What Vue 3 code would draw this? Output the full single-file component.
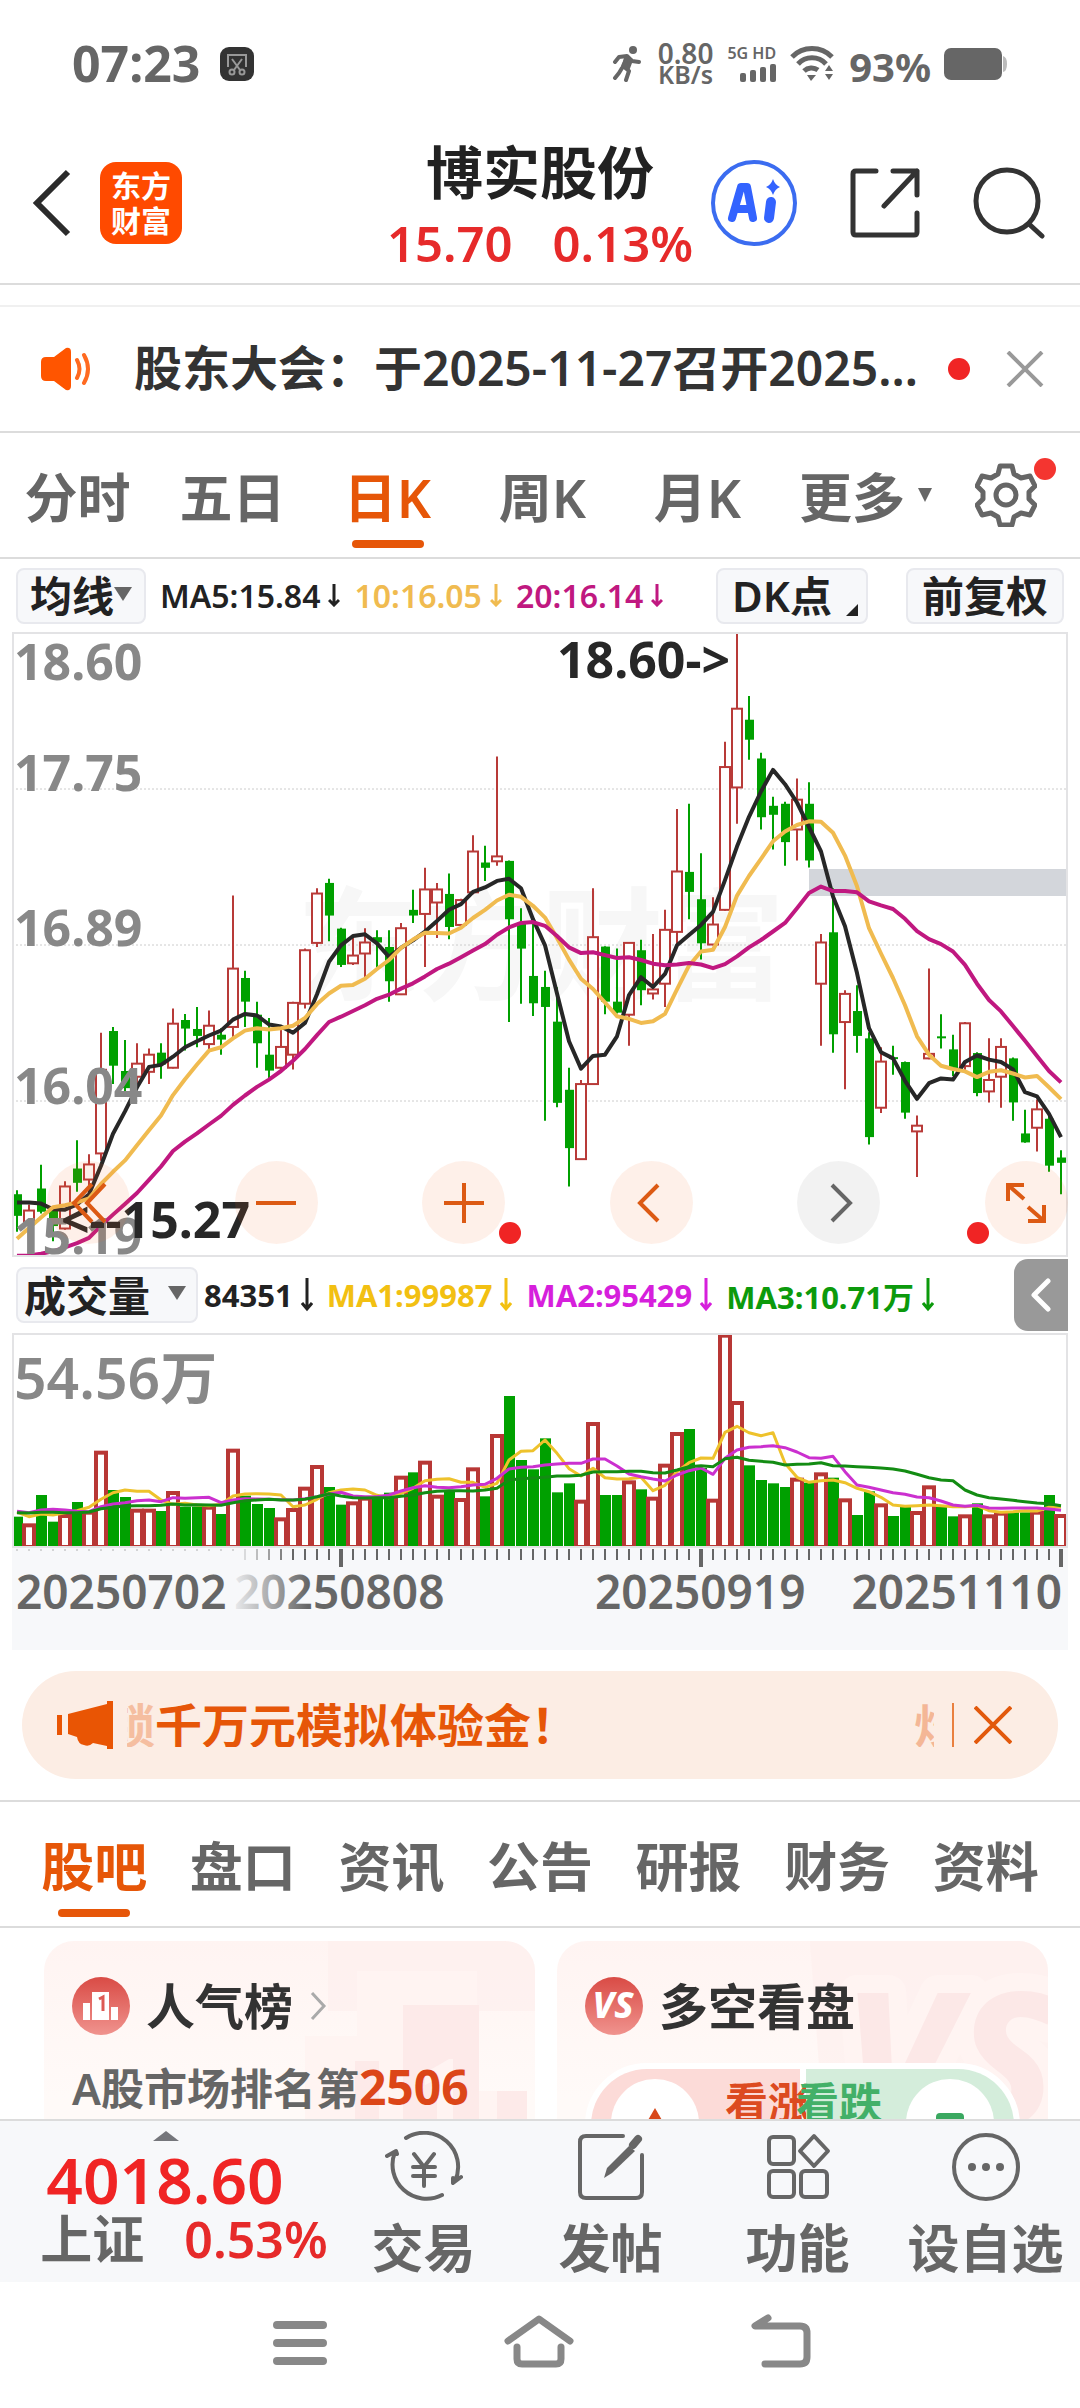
<script setup>
import { ref } from 'vue'

const periods = ['分时', '五日', '日K', '周K', '月K']
const period = ref('日K')
const sections = ['股吧', '盘口', '资讯', '公告', '研报', '财务', '资料']
const section = ref('股吧')

const STEP = 12
const FIRST = 5
const cx = (i) => FIRST + i * STEP

// Chart levels run from 32 (top edge) to 1561 (bottom edge).
const py = (v) => (v - 32) * 0.408

// direction, high, body top, body bottom, low
const candleData = `g 1400 1410 1463 1502|r 1435 1450 1480 1490|g 1338 1396 1453 1457|g 1440 1448 1488 1525
r 1378 1391 1494 1497|g 1278 1347 1382 1404|r 1312 1337 1374 1410|r 1014 1105 1310 1328
g 1000 1010 1095 1140|g 1032 1108 1150 1165|r 1040 1090 1122 1150|r 1053 1068 1110 1140
g 1040 1063 1092 1127|r 955 992 1100 1102|g 968 983 1004 1058|g 951 1005 1022 1050
r 960 997 1042 1055|g 1003 1019 1031 1068|r 678 857 1000 1025|g 862 880 938 1000
g 938 970 1040 1100|g 978 1068 1107 1128|r 1000 1049 1100 1104|r 938 941 1068 1104
r 808 812 943 955|r 660 673 794 804|g 637 647 727 790|g 757 759 848 853
r 780 825 844 848|r 758 793 820 882|g 763 780 793 855|g 763 804 888 938
r 745 758 920 922|g 664 713 727 745|r 610 663 723 853|r 647 663 695 782
g 624 674 755 785|r 686 689 750 752|r 530 570 670 675|g 556 597 610 642
r 337 582 594 605|g 592 593 736 988|g 709 745 808 943|g 745 875 942 973
g 862 902 951 1230|g 903 987 1186 1197|g 1100 1154 1297 1391|r 1130 1140 1324 1326
r 660 780 1140 1142|g 802 803 938 969|g 808 938 965 967|r 792 794 970 1046
g 786 812 910 947|r 772 908 918 933|r 713 762 894 951|r 466 619 767 800
g 453 620 669 736|g 574 687 795 835|r 682 749 798 800|r 301 363 713 715
r 32 220 413 502|g 189 247 296 345|g 328 342 486 516|g 436 458 480 565
g 448 453 547 605|r 391 443 516 592|g 400 453 592 609|r 772 793 894 1046
g 660 768 1018 1063|r 910 919 988 1153|g 898 961 1022 1063|g 1013 1028 1270 1288
r 1050 1085 1198 1211|g 1046 1074 1078 1117|g 1085 1086 1210 1225|r 1217 1242 1256 1368
r 857 1066 1077 1079|g 969 1023 1027 1053|g 1019 1055 1104 1120|r 988 991 1096 1105
g 1062 1064 1162 1170|r 1028 1130 1158 1185|r 1028 1049 1122 1198|g 1075 1077 1185 1230
g 1203 1261 1283 1284|r 1178 1202 1247 1305|g 1210 1225 1340 1355|g 1302 1320 1333 1410`

const candles = candleData.split(/[|\n]/).map((row, i) => {
  const [dir, ...v] = row.split(' ')
  const [high, top, bottom, low] = v.map((n) => py(Number(n)))
  return { x: cx(i), up: dir === 'r', high, top, bottom, low, h: Math.max(2, bottom - top) }
})

const ma5 = [1430, 1430, 1433, 1447, 1448, 1435, 1410, 1340, 1262, 1207, 1148, 1098, 1093, 1073, 1050, 1035, 1021, 1009, 982, 968, 972, 994, 999, 1014, 990, 920, 840, 800, 777, 773, 795, 828, 806, 788, 766, 740, 713, 699, 669, 658, 642, 637, 660, 736, 800, 918, 1035, 1102, 1071, 1068, 1023, 922, 878, 902, 870, 800, 775, 750, 718, 640, 558, 485, 423, 370, 405, 450, 510, 570, 680, 753, 868, 1003, 1062, 1077, 1132, 1176, 1138, 1126, 1129, 1086, 1070, 1080, 1086, 1104, 1160, 1170, 1213, 1270]
const ma10 = [1519, 1493, 1467, 1442, 1437, 1430, 1420, 1385, 1355, 1327, 1290, 1253, 1217, 1167, 1128, 1092, 1058, 1050, 1028, 1009, 1003, 1006, 1003, 997, 978, 944, 918, 899, 897, 882, 858, 836, 806, 786, 769, 770, 771, 757, 733, 713, 690, 676, 681, 703, 732, 782, 835, 882, 907, 940, 974, 980, 990, 986, 968, 908, 850, 815, 811, 755, 678, 630, 588, 545, 521, 505, 496, 497, 524, 580, 655, 758, 820, 880, 947, 1023, 1068, 1095, 1103, 1109, 1123, 1110, 1106, 1114, 1124, 1120, 1148, 1177]
const ma20 = [1561, 1560, 1556, 1550, 1540, 1530, 1517, 1487, 1460, 1434, 1407, 1375, 1342, 1304, 1281, 1261, 1239, 1218, 1191, 1168, 1147, 1129, 1108, 1083, 1054, 1020, 988, 975, 961, 947, 931, 921, 906, 893, 876, 858, 845, 829, 813, 797, 774, 756, 745, 743, 752, 777, 805, 819, 817, 824, 831, 829, 836, 845, 849, 847, 843, 847, 856, 846, 827, 805, 787, 766, 745, 709, 672, 656, 667, 667, 670, 692, 702, 711, 735, 765, 785, 797, 815, 848, 894, 934, 962, 998, 1034, 1071, 1108, 1136]

// Volume levels run from 279 (top edge) to 922 (baseline).
const vy = (v) => (v - 279) / 3
const VOL_BASE = vy(921)
const volumes = [830, 850, 765, 845, 822, 786, 812, 632, 750, 771, 806, 806, 813, 753, 800, 800, 797, 822, 626, 767, 792, 804, 832, 804, 740, 675, 741, 794, 784, 770, 775, 758, 707, 697, 662, 764, 752, 774, 682, 769, 582, 468, 660, 688, 595, 757, 730, 779, 546, 765, 765, 721, 748, 770, 671, 576, 567, 684, 776, 281, 483, 676, 720, 730, 741, 713, 728, 697, 713, 775, 825, 754, 790, 828, 797, 813, 736, 797, 829, 823, 790, 823, 815, 817, 817, 812, 765, 822]
const bars = volumes.map((v, i) => ({
  x: cx(i),
  up: candles[i].up || i === 87,
  y: vy(v),
  h: VOL_BASE - vy(v)
}))
const vma1 = [816, 830, 822, 825, 818, 812, 802, 778, 758, 750, 754, 754, 780, 793, 790, 795, 797, 793, 768, 762, 761, 762, 765, 800, 795, 778, 758, 750, 747, 750, 766, 773, 760, 745, 722, 718, 716, 727, 727, 742, 730, 660, 634, 632, 600, 640, 686, 708, 685, 713, 717, 716, 712, 752, 736, 695, 668, 654, 655, 577, 559, 578, 587, 578, 670, 712, 727, 722, 720, 728, 745, 755, 772, 795, 799, 797, 795, 797, 800, 800, 797, 812, 817, 815, 812, 813, 802, 801]
const vma2 = [814, 818, 810, 808, 810, 814, 815, 800, 792, 788, 782, 780, 785, 773, 775, 773, 772, 788, 780, 776, 777, 778, 779, 780, 776, 770, 762, 757, 768, 770, 770, 765, 753, 743, 737, 742, 743, 740, 735, 733, 715, 687, 682, 680, 675, 672, 670, 670, 657, 657, 678, 702, 710, 717, 723, 705, 692, 684, 703, 655, 630, 622, 620, 617, 623, 636, 653, 655, 649, 695, 735, 742, 750, 758, 763, 771, 773, 783, 795, 799, 796, 804, 805, 804, 804, 804, 807, 811]
const vma3 = [818, 819, 817, 817, 818, 818, 816, 806, 802, 798, 797, 797, 796, 792, 795, 794, 795, 796, 788, 782, 780, 778, 780, 780, 778, 770, 761, 768, 773, 774, 773, 773, 769, 765, 758, 754, 752, 752, 753, 750, 745, 720, 716, 714, 712, 708, 708, 706, 696, 695, 695, 694, 694, 698, 699, 690, 680, 677, 680, 656, 652, 661, 664, 667, 675, 673, 672, 668, 677, 678, 680, 682, 684, 687, 693, 703, 713, 720, 722, 750, 765, 773, 777, 781, 785, 789, 791, 797]

const line = (values, scale) => values.map((v, i) => `${cx(i)},${scale(v).toFixed(1)}`).join(' ')

const priceLabels = [
  { text: '18.60', y: 48 },
  { text: '17.75', y: 159 },
  { text: '16.89', y: 314 },
  { text: '16.04', y: 472 },
  { text: '15.19', y: 622 }
]
const gridLines = [157, 313, 469]

const ticks = volumes.map((_, i) => ({
  x: cx(i),
  major: i === 27 || i === 57 || i === 87,
  h: i < 19 ? 2 : i === 27 || i === 57 || i === 87 ? 18 : 11,
  opacity: i < 19 ? 0.25 : Math.min(1, (i - 18) / 5)
}))

const averages = [
  { name: 'MA5:15.84', tone: 'ink' },
  { name: '10:16.05', tone: 'amber' },
  { name: '20:16.14', tone: 'magenta' }
]
const volumeAverages = [
  { name: '84351', tone: 'ink' },
  { name: 'MA1:99987', tone: 'gold' },
  { name: 'MA2:95429', tone: 'violet' },
  { name: 'MA3:10.71万', tone: 'green' }
]
</script>

<template>
  <div class="app">
    <div class="status">
      <span class="clock">07:23</span>
      <svg class="snip" width="34" height="34" viewBox="0 0 34 34" fill="none">
        <rect width="34" height="34" rx="9" fill="#333" />
        <path d="M8 20V8h18v12M12 12l8 11M22 12l-8 11" stroke="#999" stroke-width="2" />
        <circle cx="12" cy="25" r="2.5" stroke="#999" stroke-width="2" />
        <circle cx="22" cy="25" r="2.5" stroke="#999" stroke-width="2" />
      </svg>
      <svg class="runner" width="32" height="36" viewBox="0 0 32 36" fill="none" stroke="#666" stroke-width="4" stroke-linecap="round" stroke-linejoin="round">
        <circle cx="21" cy="4" r="4" fill="#666" stroke="none" />
        <path d="M3 16l4-5 8-1 5 5 7 1M15 11l-4 9 6 5-3 9M10 22l-3 5-4 5" />
        <path d="M14 12l-2 8 4 2 3-8z" fill="#666" />
      </svg>
      <div class="speed"><span>0.80</span><small>KB/s</small></div>
      <div class="cell">
        <span>5G HD</span>
        <svg width="36" height="18" viewBox="0 0 36 18" fill="#666">
          <rect x="0" y="9" width="6" height="9" rx="2" /><rect x="10" y="6" width="6" height="12" rx="2" />
          <rect x="20" y="3" width="6" height="15" rx="2" /><rect x="30" y="0" width="6" height="18" rx="2" />
        </svg>
      </div>
      <svg class="wifi" width="46" height="36" viewBox="0 0 46 36" fill="none" stroke="#666" stroke-width="5">
        <path d="M2 11a28 28 0 0 1 40 0M8 18a19 19 0 0 1 28 0M14 25a11 11 0 0 1 14-1" />
        <path d="M17 29h9l-5 6z" fill="#666" stroke="none" />
        <path d="M35 25l4-6 4 6zM35 28h8l-4 6z" fill="#666" stroke="none" />
      </svg>
      <span class="percent">93%</span>
      <svg width="64" height="32" viewBox="0 0 64 32"><rect width="58" height="32" rx="7" fill="#666" /><path d="M59 8q4 1 4 8t-4 8z" fill="#bbb" /></svg>
    </div>

    <header class="header">
      <div class="head-left">
        <button class="plain" aria-label="返回">
          <svg width="40" height="68" viewBox="0 0 40 68" fill="none" stroke="#2b2b2b" stroke-width="6"><path d="M36 3L5 34l31 31" /></svg>
        </button>
        <a class="logo" href="#">东方<br />财富</a>
      </div>
      <div class="title">
        <h1>博实股份</h1>
        <p><span>15.70</span><span>0.13%</span></p>
      </div>
      <div class="head-right">
        <button class="plain" aria-label="Ai">
          <svg width="86" height="86" viewBox="0 0 86 86" fill="none">
            <circle cx="43" cy="43" r="41" stroke="#3b6cf0" stroke-width="4" />
            <path d="M21 58l9-31h6l6 31M25 49h14" stroke="#3363ff" stroke-width="8" stroke-linejoin="round" stroke-linecap="round" />
            <path d="M60 42l-2 16" stroke="#3363ff" stroke-width="10" stroke-linecap="round" />
            <path d="M62 19q2 6 7 8-5 2-7 8-2-6-7-8 5-2 7-8z" fill="#3363ff" />
          </svg>
        </button>
        <button class="plain" aria-label="分享">
          <svg width="70" height="70" viewBox="0 0 70 70" fill="none" stroke="#333" stroke-width="5" stroke-linecap="round" stroke-linejoin="round">
            <path d="M26 3H6q-3 0-3 3v58q0 3 3 3h58q3 0 3-3V45M43 3h24v24M67 3L34 38" />
          </svg>
        </button>
        <button class="plain" aria-label="搜索">
          <svg width="72" height="72" viewBox="0 0 72 72" fill="none" stroke="#333" stroke-width="5" stroke-linecap="round">
            <circle cx="34" cy="34" r="31" /><path d="M56 57l13 12" />
          </svg>
        </button>
      </div>
    </header>

    <div class="notice">
      <svg class="horn" width="54" height="44" viewBox="0 0 54 44" fill="none">
        <path d="M6 10h8L26 1q5-1 5 4v34q0 5-5 4L14 34H6q-5 0-5-5V15q0-5 5-5z" fill="#ff5500" />
        <path d="M37 13q5 9 0 18M44 8q8 14 0 28" stroke="#ff6a20" stroke-width="4" stroke-linecap="round" />
      </svg>
      <a href="#">股东大会：于2025-11-27召开2025...</a>
      <i class="dot"></i>
      <button class="plain" aria-label="关闭">
        <svg width="38" height="36" viewBox="0 0 38 36" stroke="#999" stroke-width="4"><path d="M2 1l34 34M36 1L2 35" /></svg>
      </button>
    </div>

    <nav class="periods">
      <button v-for="p in periods" :key="p" class="tab" :class="{ on: p === period }" @click="period = p">{{ p }}</button>
      <button class="tab more">更多<svg width="16" height="16" viewBox="0 0 16 16"><path d="M1 1h14L8 15z" fill="#666" /></svg></button>
      <button class="gear" aria-label="设置">
        <svg width="62" height="64" viewBox="0 0 62 64" fill="none" stroke="#666" stroke-width="5" stroke-linejoin="round">
          <path d="M25 3h12l2 8 7 4 9-2 5 10-6 6v7l6 6-5 10-9-2-7 4-2 8H25l-2-8-7-4-9 2-5-10 6-6v-7l-6-6 5-10 9 2 7-4z" />
          <circle cx="31" cy="32" r="10" />
        </svg>
        <i class="dot"></i>
      </button>
    </nav>

    <div class="indicator">
      <button class="chip">均线<svg width="18" height="16" viewBox="0 0 18 16"><path d="M0 1h18L9 15z" fill="#666" /></svg></button>
      <span v-for="m in averages" :key="m.name" class="avg" :class="m.tone">{{ m.name }}<svg width="12" height="23" viewBox="0 0 12 23" fill="none" stroke="currentColor" stroke-width="3"><path d="M6 0v21M1 16l5 5 5-5" /></svg></span>
      <button class="chip dk">DK点<svg width="12" height="12" viewBox="0 0 12 12"><path d="M12 0v12H0z" fill="#222" /></svg></button>
      <button class="chip">前复权</button>
    </div>

    <section class="chart">
      <svg class="plot" viewBox="0 0 1056 625">
        <text class="mark" x="285" y="358" aria-hidden="true">东方财富</text>
        <line v-for="g in gridLines" :key="g" x1="0" x2="1056" :y1="g" :y2="g" stroke="#ccc" stroke-dasharray="2 2" />
        <rect x="797" y="237" width="258" height="27" fill="#d3d6db" />
        <g v-for="c in candles" :key="c.x" :stroke="c.up ? '#b83a38' : '#00a000'" stroke-width="2">
          <template v-if="c.up">
            <path :d="`M${c.x} ${c.high}V${c.top}M${c.x} ${c.bottom}V${c.low}`" />
            <rect :x="c.x - 5" :y="c.top" width="10" :height="c.h" fill="#fff" />
          </template>
          <template v-else>
            <path :d="`M${c.x} ${c.high}V${c.low}`" />
            <rect :x="c.x - 4" :y="c.top" width="9" :height="c.h" fill="#00a000" stroke="none" />
          </template>
        </g>
        <g fill="none" stroke-width="4" stroke-linejoin="round">
          <polyline :points="line(ma5, py)" stroke="#272727" />
          <polyline :points="line(ma10, py)" stroke="#f0bb50" />
          <polyline :points="line(ma20, py)" stroke="#c01880" />
        </g>
        <text v-for="p in priceLabels" :key="p.text" class="price" x="2" :y="p.y">{{ p.text }}</text>
        <text class="peak" x="718" y="46" text-anchor="end">18.60-&gt;</text>
        <text class="peak" x="49" y="606">&lt;--15.27</text>
      </svg>
      <div class="controls">
        <button aria-label="向左滚动"><svg width="38" height="40" viewBox="0 0 38 40"><path d="M22 1L4 20l18 19M35 1L17 20l18 19" /></svg></button>
        <button aria-label="缩小"><svg width="40" height="40" viewBox="0 0 40 40"><path d="M0 20h40" /></svg></button>
        <button aria-label="放大"><svg width="40" height="40" viewBox="0 0 40 40"><path d="M0 20h40M20 0v40" /></svg><i class="dot"></i></button>
        <button aria-label="前移"><svg width="38" height="40" viewBox="0 0 38 40"><path d="M26 2L8 20l18 18" /></svg></button>
        <button class="idle" aria-label="后移"><svg width="38" height="40" viewBox="0 0 38 40"><path d="M12 2l18 18-18 18" /></svg></button>
        <button aria-label="全屏"><svg width="40" height="40" viewBox="0 0 40 40"><path d="M18 2H2v16M2 2l16 14M22 38h16V22M38 38L22 24" /></svg><i class="dot left"></i></button>
      </div>
    </section>

    <div class="indicator volume-row">
      <button class="chip wide">成交量<svg width="18" height="16" viewBox="0 0 18 16"><path d="M0 1h18L9 15z" fill="#666" /></svg></button>
      <span v-for="m in volumeAverages" :key="m.name" class="avg" :class="m.tone">{{ m.name }}<svg width="12" height="34" viewBox="0 0 12 34" fill="none" stroke="currentColor" stroke-width="3"><path d="M6 0v31M1 25l5 6 5-6" /></svg></span>
      <button class="drawer" aria-label="展开">
        <svg width="20" height="34" viewBox="0 0 20 34" fill="none" stroke="#fff" stroke-width="5" stroke-linecap="round" stroke-linejoin="round"><path d="M17 3L3 17l14 14" /></svg>
      </button>
    </div>

    <section class="chart">
      <svg class="plot" viewBox="0 0 1056 215">
        <g v-for="b in bars" :key="b.x">
          <rect v-if="b.up" :x="b.x - 5" :y="b.y + 2" width="10" :height="b.h - 2" fill="#fff" stroke="#b83735" stroke-width="4" />
          <rect v-else :x="b.x - 5" :y="b.y" width="11" :height="b.h + 2" fill="#00a000" />
        </g>
        <g fill="none" stroke-width="3" stroke-linejoin="round">
          <polyline :points="line(vma1, vy)" stroke="#eec22c" />
          <polyline :points="line(vma2, vy)" stroke="#cb30cf" />
          <polyline :points="line(vma3, vy)" stroke="#138c13" />
        </g>
        <text class="price big" x="2" y="66">54.56万</text>
      </svg>
    </section>
    <div class="axis">
      <svg class="plot" viewBox="0 0 1056 102">
        <defs>
          <linearGradient id="dateFade" gradientUnits="userSpaceOnUse" x1="218" x2="296" y1="0" y2="0">
            <stop offset="0" stop-color="#f1f2f4" /><stop offset="1" stop-color="#666" />
          </linearGradient>
        </defs>
        <rect v-for="t in ticks" :key="t.x" :x="t.major ? t.x - 2 : t.x - 1" y="1" :width="t.major ? 4 : 2" :height="t.h" :opacity="t.opacity" fill="#666" />
        <g class="dates">
          <text x="4" y="61">20250702</text>
          <text x="222" y="61" fill="url(#dateFade)">20250808</text>
          <text x="583" y="61">20250919</text>
          <text x="1050" y="61" text-anchor="end">20251110</text>
        </g>
      </svg>
    </div>

    <aside class="promo">
      <svg width="58" height="48" viewBox="0 0 58 48" fill="#e95504">
        <path d="M0 14h5v20H0zM11 13L50 3V0h6v48h-6v-3l-14-3q-4 4-9 2-6-1-7-8l-9-3z" />
      </svg>
      <a class="marquee" href="#"><span class="lead">锁</span><span>千万元模拟体验金！</span><span class="tail">炒</span></a>
      <button class="plain" aria-label="关闭">
        <svg width="38" height="38" viewBox="0 0 38 38" stroke="#e2590c" stroke-width="4"><path d="M1 1l36 36M37 1L1 37" /></svg>
      </button>
    </aside>

    <nav class="sections">
      <button v-for="s in sections" :key="s" class="tab" :class="{ on: s === section }" @click="section = s">{{ s }}</button>
    </nav>

    <main class="cards">
      <article class="card">
        <svg class="art" width="230" height="180" viewBox="0 0 230 180">
          <rect x="23" width="207" height="70" fill="#fdeeec" opacity=".6" />
          <path d="M0 95h52V30h120v120h26v30H0z" fill="#fff4f2" />
          <path d="M50 120h24v60H50zM98 64h76v116H98zM192 150h30v30h-30z" fill="#fdeae9" />
          <path d="M120 132l24-14h4v62h-16v-42l-12 6z" fill="#fff4f2" />
        </svg>
        <h2>
          <svg width="58" height="58" viewBox="0 0 58 58">
            <defs><linearGradient id="badge" x1="0" x2="0" y1="0" y2="1"><stop offset="0" stop-color="#d94b45" /><stop offset="1" stop-color="#f0938e" /></linearGradient></defs>
            <circle cx="29" cy="29" r="29" fill="url(#badge)" />
            <path d="M11 43V26h7v17zM20 43V15h17v28zM39 43V30h7v13z" fill="#fff" />
            <path d="M27 22l4-2v14" fill="none" stroke="#dd5a54" stroke-width="3" />
          </svg>
          人气榜
          <svg width="18" height="28" viewBox="0 0 18 28" fill="none" stroke="#aaa" stroke-width="3"><path d="M3 1l12 13L3 27" /></svg>
        </h2>
        <p>A股市场排名第<b>2506</b></p>
      </article>
      <article class="card">
        <svg class="art" width="240" height="180" viewBox="0 0 240 180">
          <path d="M2 0h238v180H15z" fill="#fdeeec" opacity=".6" />
          <text class="vs" x="34" y="186" aria-hidden="true">VS</text>
        </svg>
        <h2>
          <svg width="58" height="58" viewBox="0 0 58 58"><circle cx="29" cy="29" r="29" fill="url(#badge)" /><text class="vs-small" x="28" y="41" text-anchor="middle">VS</text></svg>
          多空看盘
        </h2>
        <div class="vote">
          <button class="rise"><i><svg width="30" height="30" viewBox="0 0 30 30"><path d="M15 0l15 26H0z" fill="#d8481a" /></svg></i><span>看涨</span></button>
          <button class="fall"><span>看跌</span><i><svg width="28" height="20" viewBox="0 0 28 20"><rect width="28" height="20" rx="4" fill="#3aa860" /></svg></i></button>
        </div>
      </article>
    </main>

    <footer class="dock">
      <a class="index" href="#">
        <svg width="26" height="10" viewBox="0 0 26 10"><path d="M13 0l13 10H0z" fill="#75767b" /></svg>
        <strong>4018.60</strong>
        <span>上证<em>0.53%</em></span>
      </a>
      <button>
        <svg width="78" height="72" viewBox="0 0 78 72" fill="none" stroke="#666" stroke-width="4" stroke-linecap="round" stroke-linejoin="round">
          <path d="M21 7a34 34 0 0 1 49 43M57 64A34 34 0 0 1 10 21M2 25l9-5 1 3M76 46l-8 6V47M29 23l10 13 10-13M39 36v19M28 36h22M28 45h22" />
        </svg>交易
      </button>
      <button>
        <svg width="68" height="72" viewBox="0 0 68 72" fill="none" stroke="#666" stroke-width="4" stroke-linecap="round" stroke-linejoin="round">
          <path d="M46 5H9Q3 5 3 11v50q0 6 6 6h50q6 0 6-6V24" />
          <path d="M56 14l5-6" stroke-width="8" /><path d="M27 47l3-10 22-22 6 5-23 22z" fill="#666" stroke="none" />
        </svg>发帖
      </button>
      <button>
        <svg width="68" height="72" viewBox="0 0 68 72" fill="none" stroke="#666" stroke-width="4" stroke-linejoin="round">
          <rect x="5" y="6" width="25" height="27" rx="4" /><rect x="5" y="40" width="25" height="26" rx="4" /><rect x="37" y="40" width="26" height="26" rx="4" /><path d="M50 5l14 15-14 15-14-15z" />
        </svg>功能
      </button>
      <button>
        <svg width="72" height="72" viewBox="0 0 72 72"><circle cx="36" cy="36" r="32" fill="none" stroke="#666" stroke-width="4" /><g fill="#666"><circle cx="22" cy="36" r="4" /><circle cx="36" cy="36" r="4" /><circle cx="50" cy="36" r="4" /></g></svg>设自选
      </button>
    </footer>

    <nav class="system">
      <button class="plain" aria-label="最近任务"><svg width="54" height="54" viewBox="0 0 54 54" stroke="#888" stroke-width="8" stroke-linecap="round"><path d="M4 11h46M4 29h46M4 47h46" /></svg></button>
      <button class="plain" aria-label="主屏幕"><svg width="70" height="54" viewBox="0 0 70 54" fill="none" stroke="#888" stroke-width="7" stroke-linecap="round" stroke-linejoin="round"><path d="M4 27L35 5l31 22M13 33v12q0 5 5 5h34q5 0 5-5V33" /></svg></button>
      <button class="plain" aria-label="返回上一页"><svg width="60" height="54" viewBox="0 0 60 54" fill="none" stroke="#888" stroke-width="7" stroke-linecap="round" stroke-linejoin="round"><path d="M17 4l-13 8h45q7 0 7 7v24q0 7-7 7H14" /></svg></button>
    </nav>
  </div>
</template>

<style>
body {
  margin: 0;
  background: #fff;
}
</style>

<style scoped>
.app {
  width: 100%;
  overflow: hidden;
  background: #fff;
  color: #222;
  font-family: "Noto Sans", "Noto Sans CJK SC", sans-serif;
  font-weight: 600;
}
button {
  padding: 0;
  border: 0;
  background: none;
  color: inherit;
  font: inherit;
}
a {
  color: inherit;
  text-decoration: none;
}
svg {
  flex: none;
}
.plain {
  display: flex;
}
.dot {
  flex: none;
  width: 22px;
  height: 22px;
  border-radius: 50%;
  background: #f02424;
}

.status {
  display: flex;
  align-items: center;
  height: 128px;
  padding: 0 72px;
  color: #666;
}
.clock {
  font-size: 50px;
  font-weight: 700;
  line-height: 60px;
  padding-bottom: 2px;
}
.snip {
  margin-left: 20px;
}
.runner {
  margin-left: auto;
}
.speed {
  display: flex;
  flex-direction: column;
  align-items: center;
  margin-left: 14px;
  font-size: 28px;
  line-height: 21px;
}
.speed small {
  font-size: 25px;
}
.cell {
  display: flex;
  flex-direction: column;
  align-items: flex-end;
  gap: 4px;
  margin-left: 14px;
  font-size: 16px;
  line-height: 14px;
}
.wifi {
  margin-left: 14px;
}
.percent {
  margin: 4px 13px 0;
  font-size: 40px;
  font-weight: 700;
}

.header {
  display: grid;
  grid-template-columns: 1fr auto 1fr;
  height: 155px;
  border-bottom: 2px solid #dcdcdc;
}
.head-left,
.head-right {
  display: flex;
  align-items: center;
  padding-bottom: 6px;
}
.head-left {
  gap: 28px;
  padding-left: 32px;
}
.head-right {
  justify-content: flex-end;
  gap: 53px;
  padding-right: 35px;
}
.logo {
  width: 82px;
  height: 70px;
  padding: 6px 0;
  border-radius: 16px;
  background: #ff4a00;
  color: #fff;
  font-size: 30px;
  line-height: 35px;
  text-align: center;
}
.title {
  padding-top: 8px;
  text-align: center;
}
.title h1 {
  margin: 0;
  font-size: 57px;
  font-weight: 600;
  line-height: 72px;
}
.title p {
  display: flex;
  gap: 40px;
  margin: 0;
  color: #e62a2a;
  font-size: 49px;
  line-height: 70px;
}

.notice {
  display: flex;
  align-items: center;
  height: 124px;
  margin-top: 20px;
  padding: 0 36px 0 40px;
  border-top: 2px solid #f0f0f0;
  border-bottom: 2px solid #dcdcdc;
  color: #333;
  font-size: 48px;
  line-height: 60px;
}
.notice a {
  flex: 1;
  margin-left: 40px;
  padding-bottom: 2px;
  white-space: nowrap;
}
.notice .plain {
  margin-left: 36px;
}

.periods {
  display: grid;
  grid-template-columns: repeat(5, 155fr) 182fr 123fr;
  height: 124px;
  border-bottom: 2px solid #dcdcdc;
}
.tab {
  position: relative;
  color: #666;
  font-size: 53px;
}
.tab.on {
  color: #e65608;
}
.tab.on::after {
  content: "";
  position: absolute;
  bottom: 9px;
  left: calc(50% - 36px);
  width: 72px;
  height: 8px;
  border-radius: 4px;
  background: #e65608;
}
.more {
  display: flex;
  align-items: center;
  justify-content: center;
  gap: 12px;
}
.gear {
  position: relative;
  display: flex;
  align-items: center;
  padding-left: 18px;
}
.gear .dot {
  position: absolute;
  top: 25px;
  left: 77px;
  background: #f43530;
}

.indicator {
  display: flex;
  align-items: center;
  gap: 14px;
  height: 73px;
  padding: 0 16px;
}
.chip {
  display: flex;
  align-items: center;
  box-sizing: border-box;
  height: 56px;
  padding: 0 14px 4px;
  border: 2px solid #e8e9ee;
  border-radius: 8px;
  background: #f7f8fa;
  font-size: 42px;
  white-space: nowrap;
}
.chip:first-child {
  padding: 0 12px 4px;
}
.chip.wide:first-child {
  gap: 18px;
  padding: 0 10px 4px 6px;
}
.chip.dk {
  gap: 14px;
  margin: 0 24px 0 auto;
  padding-right: 8px;
}
.chip.dk svg {
  align-self: flex-end;
  margin-bottom: 2px;
}
.avg {
  display: flex;
  align-items: center;
  gap: 8px;
  font-size: 32px;
  white-space: nowrap;
}
.ink { color: #222; }
.amber { color: #f0bb50; }
.magenta { color: #c01880; }
.gold { color: #f2c012; }
.violet { color: #d61fdc; }
.green { color: #0c9a0c; }
.volume-row {
  height: 76px;
  padding-right: 12px;
}
.volume-row .wide {
  margin-right: -8px;
}
.volume-row .avg {
  font-size: 31px;
  font-weight: 700;
}
.drawer {
  display: flex;
  align-items: center;
  justify-content: center;
  width: 54px;
  height: 72px;
  margin-left: auto;
  border-radius: 14px 0 0 14px;
  background: #999;
}

.chart {
  position: relative;
  margin: 0 12px;
  outline: 2px solid #e3e3e5;
  outline-offset: -2px;
}
.plot {
  display: block;
  width: 100%;
  height: auto;
}
.mark {
  fill: #f7f7f7;
  font-size: 122px;
  font-weight: 700;
}
.price {
  fill: #888;
  font-size: 50px;
  font-weight: 700;
}
.price.big {
  font-size: 57px;
  font-weight: 600;
}
.peak {
  fill: #272727;
  font-size: 50px;
  font-weight: 700;
}
.controls {
  position: absolute;
  right: 0;
  bottom: 13px;
  left: 35px;
  display: flex;
  justify-content: space-between;
}
.controls button {
  position: relative;
  display: flex;
  align-items: center;
  justify-content: center;
  width: 83px;
  height: 83px;
  border-radius: 50%;
  background: rgba(250, 110, 40, 0.1);
}
.controls svg {
  fill: none;
  stroke: #dc5a14;
  stroke-width: 4px;
}
.controls .idle {
  background: rgba(0, 0, 0, 0.05);
}
.controls .idle svg {
  stroke: #666;
}
.controls .dot {
  position: absolute;
  right: -16px;
  bottom: 0;
}
.controls .left {
  right: 79px;
}

.axis {
  margin: 0 12px;
  background: #f7f8fa;
}
.dates {
  fill: #666;
  font-size: 46px;
}

.promo {
  display: flex;
  align-items: center;
  height: 108px;
  margin: 21px 22px;
  padding: 0 46px 0 35px;
  box-sizing: border-box;
  border-radius: 54px;
  background: #fcede4;
  color: #e65608;
  font-size: 47px;
}
.marquee {
  display: flex;
  flex: 1;
  margin: 0 20px 0 12px;
  overflow: hidden;
  border-right: 2px solid #e9803f;
  line-height: 44px;
}
.lead {
  display: flex;
  justify-content: flex-end;
  width: 28px;
  overflow: hidden;
  opacity: 0.3;
}
.tail {
  width: 20px;
  margin: 0 18px 0 auto;
  overflow: hidden;
  opacity: 0.35;
}

.sections {
  display: grid;
  grid-template-columns: repeat(7, 1fr);
  height: 124px;
  padding: 0 20px;
  border-top: 2px solid #dcdcdc;
  border-bottom: 2px solid #dcdcdc;
}

.cards {
  display: grid;
  grid-template-columns: 1fr 1fr;
  gap: 22px;
  height: 178px;
  padding: 13px 32px 0 44px;
  overflow: hidden;
}
.card {
  position: relative;
  box-sizing: border-box;
  height: 260px;
  padding: 30px 28px;
  overflow: hidden;
  border-radius: 30px;
  background: linear-gradient(#fff4f2, #fffaf8 60%);
}
.art {
  position: absolute;
  top: 0;
  right: 0;
}
.vs {
  fill: #fce8e7;
  stroke: #fff4f2;
  stroke-width: 36px;
  stroke-linejoin: round;
  paint-order: stroke;
  font-size: 188px;
  font-style: italic;
  font-weight: 800;
}
.vs-small {
  fill: #fff;
  font-size: 36px;
  font-style: italic;
  font-weight: 800;
}
.card h2 {
  position: relative;
  display: flex;
  align-items: center;
  gap: 16px;
  margin: 0;
  color: #333;
  font-size: 49px;
  font-weight: 700;
  line-height: 70px;
}
.card p {
  position: relative;
  margin: 16px 0 0;
  color: #666;
  font-size: 43px;
  line-height: 60px;
  white-space: nowrap;
}
.card b {
  color: #dc4618;
  font-size: 48px;
  font-weight: 700;
}
.vote {
  position: relative;
  display: grid;
  grid-template-columns: 1fr 1fr;
  gap: 6px;
  margin-top: 22px;
  border: 6px solid #fff;
  border-radius: 70px;
  background: #fff;
}
.vote button {
  display: flex;
  align-items: flex-start;
  min-width: 0;
  height: 112px;
  padding: 10px 20px;
  font-size: 43px;
  line-height: 48px;
  white-space: nowrap;
}
.vote i {
  display: flex;
  flex: none;
  align-items: center;
  justify-content: center;
  width: 88px;
  height: 88px;
  border-radius: 50%;
  background: #fff;
}
.vote .rise {
  border-radius: 60px 0 0 60px;
  background: #fcdbd8;
  color: #dc4a20;
}
.vote .fall {
  justify-content: flex-end;
  border-radius: 0 60px 60px 0;
  background: #d4eddb;
  color: #43b068;
}
.rise span {
  margin-left: 26px;
}
.fall span {
  margin-right: 24px;
}

.dock {
  display: grid;
  grid-template-columns: 330fr 187fr 187fr 187fr 189fr;
  height: 161px;
  border-top: 2px solid #dcdcdc;
  background: #f7f8fa;
  color: #666;
}
.dock button {
  display: flex;
  flex-direction: column;
  align-items: center;
  gap: 12px;
  padding-top: 10px;
  font-size: 52px;
  line-height: 66px;
  white-space: nowrap;
}
.index {
  display: flex;
  flex-direction: column;
  align-items: center;
  padding-top: 10px;
}
.index svg {
  margin-left: 2px;
}
.index strong {
  color: #f02424;
  font-size: 64px;
  font-weight: 600;
  line-height: 78px;
}
.index span {
  display: flex;
  align-items: center;
  gap: 40px;
  margin-left: 38px;
  font-size: 52px;
  line-height: 40px;
}
.index em {
  color: #e62a2a;
  font-size: 50px;
  font-style: normal;
}

.system {
  display: flex;
  align-items: center;
  justify-content: space-between;
  height: 126px;
  padding: 0 269px 8px 273px;
  box-sizing: border-box;
}
</style>
